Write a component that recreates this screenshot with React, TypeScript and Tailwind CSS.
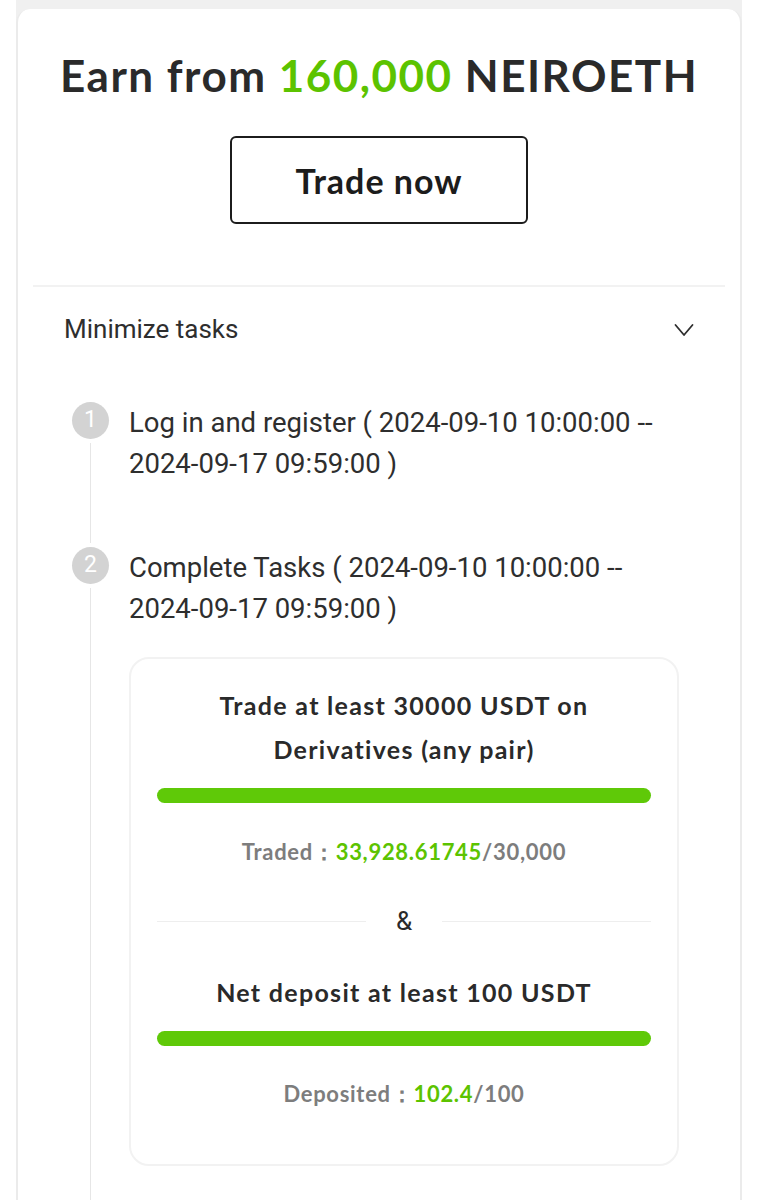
const Step = ({ num, children, last }: { num: number; children: React.ReactNode; last?: boolean }) => {
  return (
    <div className="flex">
      <div className="flex w-[57px] shrink-0 flex-col items-center pr-[20px]">
        <div className="flex h-[37px] w-[37px] shrink-0 items-center justify-center rounded-full bg-[#d3d3d3] text-[23px] text-white">
          {num}
        </div>
        <div className={`w-px flex-1 bg-[#e6e6e6] ${last ? "mt-1" : "my-1"}`} />
      </div>
      <div className="flex-1">{children}</div>
    </div>
  )
}

const Progress = () => <div className="h-[15px] w-full rounded-full bg-[#5fc908]" />

export default function App() {
  return (
    <div className="min-h-screen bg-white px-4 font-['Roboto',sans-serif]">
      <div className="bg-[#f0f0f0] pt-[9px]">
        <div className="h-[1191px] overflow-hidden rounded-t-[14px] border-x-2 border-[#ebebeb] bg-white">
          <div className="flex flex-col items-center pt-[26px]">
            <h1 className="font-['Lato',sans-serif] text-[44px] font-bold leading-[80px] tracking-[1.5px] text-[#2a2a2a]">
              Earn from <span className="text-[#5cc300]">160,000</span> NEIROETH
            </h1>
            <button
              type="button"
              className="mt-[21px] h-[88px] w-[298px] rounded-[6px] border-2 border-[#1c1c1c] font-['Lato',sans-serif] text-[34px] font-bold tracking-[1px] text-[#1c1c1c]"
            >
              Trade now
            </button>
          </div>
          <div className="mx-[15px] mt-[61px] h-[2px] bg-[#f2f2f2]" />
          <div className="flex items-center justify-between pl-[46px] pr-[46px] pt-[23px]">
            <span className="text-[26px] text-[#2e2e2e]">Minimize tasks</span>
            <svg width="20" height="14" viewBox="0 0 20 14" fill="none" stroke="#2e2e2e" strokeWidth="1.8" strokeLinecap="round" strokeLinejoin="round">
              <path d="M1.5 2 L10 12 L18.5 2" />
            </svg>
          </div>
          <div className="pl-[54px] pr-[61px] pt-[53px]">
            <Step num={1}>
              <p className="pb-[63px] text-[27.5px] leading-[41px] text-[#2e2e2e]">
                Log in and register ( <span className="whitespace-nowrap">2024-09-10</span> 10:00:00 --{" "}
                <span className="whitespace-nowrap">2024-09-17</span> 09:59:00 )
              </p>
            </Step>
            <Step num={2} last>
              <p className="text-[27.5px] leading-[41px] text-[#2e2e2e]">
                Complete Tasks ( <span className="whitespace-nowrap">2024-09-10</span> 10:00:00 --{" "}
                <span className="whitespace-nowrap">2024-09-17</span> 09:59:00 )
              </p>
              <div className="mb-[60px] mt-[28px] rounded-[20px] border-2 border-[#f2f2f2] px-[26px] pb-[54px] pt-[24px] text-center">
                <p className="font-['Lato',sans-serif] text-[25px] font-bold leading-[44px] tracking-[1.3px] text-[#2a2a2a]">
                  Trade at least 30000 USDT on
                  <br />
                  Derivatives (any pair)
                </p>
                <div className="mt-[17px]">
                  <Progress />
                </div>
                <p className="mt-[32px] font-['Lato',sans-serif] text-[22px] font-bold tracking-[0.7px] text-[#7d7d7d]">
                  Traded：<span className="text-[#5cc300]">33,928.61745</span>/30,000
                </p>
                <div className="mt-[34px] flex items-center gap-[30px]">
                  <div className="h-px flex-1 bg-[#eeeeee]" />
                  <span className="text-[26px] text-[#2a2a2a]">&amp;</span>
                  <div className="h-px flex-1 bg-[#eeeeee]" />
                </div>
                <p className="mt-[33px] font-['Lato',sans-serif] text-[25px] font-bold tracking-[1.3px] text-[#2a2a2a]">
                  Net deposit at least 100 USDT
                </p>
                <div className="mt-[19px]">
                  <Progress />
                </div>
                <p className="mt-[31px] font-['Lato',sans-serif] text-[22px] font-bold tracking-[0.7px] text-[#7d7d7d]">
                  Deposited：<span className="text-[#5cc300]">102.4</span>/100
                </p>
              </div>
            </Step>
          </div>
        </div>
      </div>
    </div>
  )
}
